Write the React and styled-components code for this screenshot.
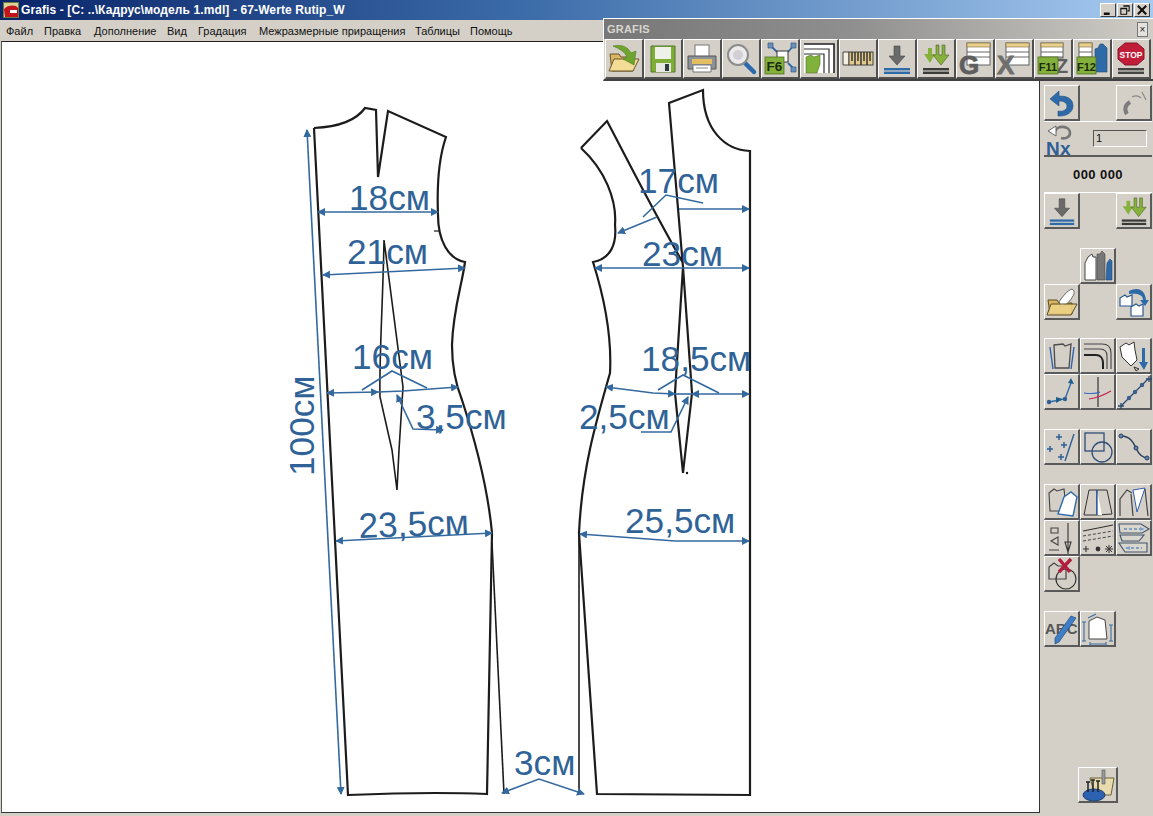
import React from "react";
import styled, { createGlobalStyle } from "styled-components";

const GlobalStyle = createGlobalStyle`
  html, body {
    margin: 0;
    padding: 0;
    background: #d4d0c8;
    overflow: hidden;
  }
`;

const Window = styled.div`
  position: relative;
  width: 1153px;
  height: 816px;
  display: flex;
  flex-direction: column;
  background: #d4d0c8;
  font-family: "Liberation Sans", Arial, sans-serif;
  overflow: hidden;
`;

const TitleBar = styled.div`
  height: 20px;
  display: flex;
  align-items: center;
  padding: 0 2px 0 3px;
  box-sizing: border-box;
  background: linear-gradient(90deg, #0a246a 0%, #3b6ba8 45%, #a6caf0 100%);
`;

const TitleText = styled.span`
  margin-left: 2px;
  color: #fff;
  font-size: 12px;
  font-weight: 700;
  letter-spacing: 0.11px;
  white-space: nowrap;
  flex: 1;
`;

const WindowControls = styled.div`
  display: flex;
  gap: 1px;
  margin-right: 1px;
`;

const ControlButton = styled.div`
  width: 14px;
  height: 12px;
  display: flex;
  align-items: center;
  justify-content: center;
  background: #d4d0c8;
  border-style: solid;
  border-width: 1px;
  border-color: #fff #404040 #404040 #fff;
`;

const MenuBar = styled.div`
  height: 21px;
  display: flex;
  align-items: center;
  padding-left: 6px;
  box-sizing: border-box;
  background: #d4d0c8;
`;

const MenuItem = styled.span`
  width: ${(p) => p.$w}px;
  font-size: 11px;
  color: #111;
  white-space: nowrap;
`;

const Workspace = styled.div`
  flex: 1;
  display: flex;
  min-height: 0;
  padding-bottom: 3px;
`;

const Canvas = styled.div`
  width: 1039px;
  margin-left: 1px;
  box-sizing: border-box;
  background: #fff;
  border-style: solid;
  border-width: 1px;
  border-color: #222 #333 #333 #555;
`;

const Drawing = styled.svg`
  display: block;
  width: 1037px;
  height: 770px;
  text {
    font-family: "Liberation Sans", Arial, sans-serif;
    font-size: 35.2px;
    fill: #2f6398;
  }
`;

const Outline = styled.path`
  fill: none;
  stroke: #1c1c1c;
  stroke-width: ${(p) => p.$w || 2.2};
  stroke-linejoin: miter;
`;

const Measure = styled.path`
  fill: none;
  stroke: #34699f;
  stroke-width: 1.6;
`;

const SidePanel = styled.div`
  flex: 1;
  display: flex;
  flex-direction: column;
  padding: 4px 1px 10px 4px;
  box-sizing: border-box;
`;

const ToolRow = styled.div`
  display: grid;
  grid-template-columns: repeat(3, 36px);
  margin-top: ${(p) => p.$gap || 0}px;
`;

const ToolButton = styled.div`
  width: 36px;
  height: 36px;
  grid-column: ${(p) => p.$col || "auto"};
  box-sizing: border-box;
  display: flex;
  align-items: center;
  justify-content: center;
  background: #d4d0c8;
  border-style: solid;
  border-width: 1px 2px 2px 1px;
  border-color: #fff #5a5a5a #5a5a5a #fff;
`;

const RepeatRow = styled.div`
  height: 36px;
  width: 108px;
  display: flex;
  align-items: center;
  padding-left: 3px;
  border-top: 1px solid #fff;
  border-bottom: 2px solid #5a5a5a;
  box-sizing: border-box;
`;

const RepeatInput = styled.div`
  width: 54px;
  height: 17px;
  margin-left: 14px;
  box-sizing: border-box;
  padding-left: 2px;
  font-size: 11px;
  line-height: 15px;
  color: #111;
  border-style: solid;
  border-width: 1px;
  border-color: #555 #fff #fff #555;
`;

const Counter = styled.div`
  width: 108px;
  height: 36px;
  display: flex;
  align-items: center;
  justify-content: center;
  box-sizing: border-box;
  font-size: 13px;
  font-weight: 700;
  color: #111;
  letter-spacing: 0.4px;
  border-bottom: 1px solid #fff;
`;

const PinButton = styled(ToolButton)`
  width: 40px;
  margin: auto 0 0 34px;
`;

const FloatingToolbar = styled.div`
  position: absolute;
  left: 603px;
  top: 18px;
  width: 550px;
  height: 63px;
  box-sizing: border-box;
  display: flex;
  flex-direction: column;
  background: #d4d0c8;
  border-style: solid;
  border-width: 1px 0 2px 1px;
  border-color: #fff #404040 #404040 #fff;
`;

const ToolbarTitle = styled.div`
  height: 20px;
  display: flex;
  align-items: center;
  justify-content: space-between;
  padding: 0 5px 0 3px;
  background: linear-gradient(90deg, #777 0%, #8f8f8f 45%, #d0cdc6 100%);
`;

const ToolbarName = styled.span`
  color: #d8d6d0;
  font-size: 11px;
  font-weight: 700;
  letter-spacing: 0.2px;
`;

const MiniClose = styled.div`
  width: 9px;
  height: 13px;
  display: flex;
  align-items: center;
  justify-content: center;
  font-size: 10px;
  color: #222;
  background: #e4e2dc;
  border: 1px solid #777;
`;

const ToolbarButtons = styled.div`
  display: flex;
  padding-left: 1px;
`;

const BarButton = styled.div`
  width: 39px;
  height: 40px;
  box-sizing: border-box;
  display: flex;
  align-items: center;
  justify-content: center;
  background: #d4d0c8;
  border-style: solid;
  border-width: 1px 2px 2px 1px;
  border-color: #fff #505050 #505050 #fff;
`;

const Glyph = styled.svg`
  display: block;
  flex: none;
  width: ${(p) => p.$size || 32}px;
  height: ${(p) => p.$size || 32}px;
  overflow: visible;
  text {
    font-family: "Liberation Sans", Arial, sans-serif;
    font-weight: 700;
  }
`;

const blue = "#2f6aa8";

const Ico = ({ children, size }) => (
  <Glyph viewBox="0 0 32 32" $size={size}>
    {children}
  </Glyph>
);

const Bars = ({ color, y = 25 }) => (
  <>
    <rect x="3" y={y} width="26" height="2.4" fill={color} />
    <rect x="3" y={y + 3.6} width="26" height="2.4" fill={color} />
  </>
);

const Table = ({ x = 10, y = 1, w = 20, h = 18, head = "#e8cf8a" }) => (
  <g>
    <rect x={x} y={y} width={w} height={h} fill="#fff" stroke="#555" strokeWidth="0.9" />
    <rect x={x} y={y} width={w} height={4} fill={head} stroke="#8a7a50" strokeWidth="0.7" />
    <path
      d={`M${x} ${y + 9}h${w}M${x} ${y + 14}h${w}M${x + w / 2} ${y}v${h}`}
      stroke="#555"
      strokeWidth="0.9"
    />
  </g>
);

const GreenTag = ({ label, w = 19, size = 11.5 }) => (
  <g>
    <rect x="1" y="14" width={w} height="17" fill="#83b13c" stroke="#4f6e22" strokeWidth="0.8" />
    <text x={1 + w / 2} y="27.5" fontSize={size} textAnchor="middle" fill="#1c2a10">
      {label}
    </text>
  </g>
);

const OpenIcon = () => (
  <Ico>
    <path d="M2 11h9l2 3h12v14H4z" fill="#d8b662" stroke="#6b5526" />
    <path d="M1 28l5-12h25l-6 12z" fill="#f2dc96" stroke="#6b5526" />
    <path d="M5 3c9-2 15 1 18 7l5-2-2 14-11-6 4-2c-2-5-7-8-14-11z" fill="#6fa52e" stroke="#4c7a1c" strokeWidth="0.6" />
  </Ico>
);
const SaveIcon = () => (
  <Ico>
    <path d="M4 3h24v26H4z" fill="#7fae37" stroke="#54752a" />
    <rect x="8" y="4" width="16" height="12" fill="#eef0ea" />
    <rect x="9" y="20" width="15" height="9" fill="#e8e8e2" />
    <rect x="18" y="21" width="4" height="7" fill="#2d3a44" />
  </Ico>
);
const PrintIcon = () => (
  <Ico>
    <rect x="9" y="2" width="14" height="12" fill="#fff" stroke="#777" />
    <path d="M2 13h28v13H2z" fill="#8d9298" stroke="#555" />
    <rect x="6" y="16" width="20" height="5" fill="#e3bf62" />
    <path d="M7 22h18v7H7z" fill="#fff" stroke="#777" />
    <path d="M10 25h12" stroke="#888" />
  </Ico>
);
const ZoomIcon = () => (
  <Ico>
    <path d="M19 19l10 10" stroke="#2b69ad" strokeWidth="4.5" strokeLinecap="round" />
    <circle cx="13" cy="12" r="10" fill="#eceaea" stroke="#8c8c8c" strokeWidth="2" />
    <circle cx="13" cy="12" r="5" fill="#d2d0d4" />
  </Ico>
);
const F6Icon = () => (
  <Ico>
    <path d="M13 9L6 2M24 9l6-7M24 20l6 6" stroke="#2f6aa8" strokeWidth="1.8" />
    <rect x="13" y="8" width="11" height="11" fill="#fff" stroke="#333" />
    <path d="M4 0h5v5H4zM27 0h5v5h-5zM27 24h5v5h-5z" fill="#6d8fb8" stroke="#2f5a8a" strokeWidth="0.7" />
    <GreenTag label="F6" size={13.5} />
  </Ico>
);
const FrameIcon = () => (
  <Ico>
    <path d="M1 1h30v29H1z" fill="#fff" stroke="none" />
    <path d="M1 1h30v29" fill="none" stroke="#222" strokeWidth="1.6" />
    <path d="M1 6h25v24M1 11h20v19" fill="none" stroke="#333" strokeWidth="1.2" />
    <path d="M3 14l5-2 3 2 6-2 0 9-3 9H3z" fill="#7fb23a" stroke="#4f6e22" strokeWidth="0.6" />
  </Ico>
);
const TapeIcon = () => (
  <Ico>
    <path d="M1 9h6v13H1z" fill="#f4f0e0" stroke="#444" />
    <rect x="7" y="9" width="24" height="13" fill="#e2c98c" stroke="#444" />
    <path d="M10 9v9M13 9v13M16 9v9M19 9v13M22 9v9M25 9v13M28 9v9" stroke="#2c2c2c" strokeWidth="1.4" />
  </Ico>
);
const DownIcon = ({ size }) => (
  <Ico size={size}>
    <path d="M13 3h6v10h5l-8 9-8-9h5z" fill="#6a6a6a" stroke="#444" strokeWidth="0.6" />
    <Bars color={blue} />
  </Ico>
);
const DownAllIcon = ({ size }) => (
  <Ico size={size}>
    <path d="M4 11h4V5h4v6h3l-5 9z" fill="#86b23c" />
    <path d="M13 12h3V2h3v10h3V2h3v10h4l-8 10z" fill="#86b23c" stroke="#3a4a1c" strokeWidth="0.5" />
    <Bars color="#3a3a3a" />
  </Ico>
);
const SheetGIcon = () => (
  <Ico>
    <Table x="8" y="0" w="23" h="22" />
    <text x="0" y="31" fontSize="26" fill="#5e5e5e" stroke="#5e5e5e" strokeWidth="0.8">G</text>
  </Ico>
);
const SheetXIcon = () => (
  <Ico>
    <Table x="8" y="0" w="23" h="22" />
    <text x="-1" y="31" fontSize="26" fill="#6e6e6e" stroke="#6e6e6e" strokeWidth="0.8">X</text>
  </Ico>
);
const F11Icon = () => (
  <Ico>
    <Table x="4" y="0" w="22" h="15" />
    <text x="19" y="30" fontSize="20" fill="#5e5e5e">Z</text>
    <GreenTag label="F11" w="20" size={11} />
  </Ico>
);
const F12Icon = () => (
  <Ico>
    <Table x="3" y="0" w="13" h="15" />
    <path d="M19 6l3-1 2-4 3 0 4 4v24H19z" fill="#2f6aa8" stroke="#1e4672" strokeWidth="0.6" />
    <GreenTag label="F12" w="19" size={11} />
  </Ico>
);
const StopIcon = () => (
  <Ico>
    <path d="M10 0h12l7 6v10l-7 6H10l-7-6V6z" fill="#c01e38" stroke="#8a1027" />
    <text x="16" y="15" fontSize="8.5" textAnchor="middle" fill="#fff">STOP</text>
    <Bars color="#444" />
  </Ico>
);

const UndoIcon = () => (
  <Ico>
    <path d="M4 12l9-8v5c9 0 14 3 14 10 0 6-6 10-13 10h-2v-5c5 1 9-1 9-5 0-3-3-5-8-5v5z" fill={blue} stroke="#1f4c7e" strokeWidth="0.6" />
  </Ico>
);
const RedoIcon = () => (
  <Ico>
    <path d="M9 27c-3-4-2-9 3-12" fill="none" stroke="#7c7c7c" strokeWidth="4" />
    <path d="M14 10c4-2 7-1 9 1M24 5l4 8" fill="none" stroke="#8a8a8a" strokeWidth="1.2" />
  </Ico>
);
const RepeatIcon = () => (
  <Ico>
    <path d="M8 9c1-7 15-7 15 1 0 5-6 6-9 5" fill="none" stroke="#777" strokeWidth="2.6" />
    <path d="M1 8l8-5v10z" fill="#fff" stroke="#666" />
    <text x="-1" y="32" fontSize="19" fill="#2f5f96">N</text>
    <text x="13" y="32" fontSize="19" fill="#2f5f96">x</text>
  </Ico>
);
const GarmentsIcon = () => (
  <Ico>
    <path d="M6 7l4-3 1 3h3v23H3V13z" fill="#fff" stroke="#444" />
    <path d="M15 4h3l2-3 3 3v26h-8z" fill="#777" stroke="#444" strokeWidth="0.6" />
    <path d="M25 13l3-4 2 2v19h-6z" fill="#2f6aa8" stroke="#1e4672" strokeWidth="0.6" />
  </Ico>
);
const FolderHandIcon = () => (
  <Ico>
    <path d="M2 14h9l2 3h13v11H4z" fill="#d8b662" stroke="#5e4a1e" />
    <path d="M13 16c3-5 9-12 13-13 2 1 3 4 1 7-3 5-6 9-12 11z" fill="#fff" stroke="#666" />
    <path d="M1 29l4-11 26 0-6 11z" fill="#eed48a" fillOpacity="0.85" stroke="#5e4a1e" />
  </Ico>
);
const SwapIcon = () => (
  <Ico>
    <path d="M2 12l5-3 2 2 5-2v11H2zM13 21l5-3 3 2 4-2v12H13z" fill="#fff" stroke="#2d5a92" strokeWidth="1.2" />
    <path d="M11 5c7-4 16-3 17 9h3l-4 6-5-6h3c0-6-7-7-14-6z" fill={blue} />
  </Ico>
);
const ResizeIcon = () => (
  <Ico>
    <path d="M8 5l9-1 2 2 6-2-2 24H9z" fill="none" stroke="#4b4b4b" strokeWidth="1.3" />
    <path d="M4 7l3 22M28 7l-3 22" stroke="#2f5fb0" strokeWidth="1.4" />
  </Ico>
);
const CornerIcon = () => (
  <Ico>
    <path d="M2 4h18c6 0 9 3 9 9v16M2 9h16c5 0 7 3 7 7v13" fill="none" stroke="#444" strokeWidth="1.1" />
    <path d="M2 15h12c5 0 7 4 7 8v6" fill="none" stroke="#222" strokeWidth="2" />
  </Ico>
);
const PieceDownIcon = () => (
  <Ico>
    <path d="M2 7l6-4 3 2 5-3 1 8 2 10-6 6-9-9z" fill="#fff" stroke="#333" />
    <path d="M24 8h3v14h3l-4 8-5-8h3z" fill={blue} />
    <path d="M16 27l5 2-3 2z" fill="none" stroke="#333" />
  </Ico>
);
const PolylineIcon = () => (
  <Ico>
    <path d="M3 26l16-3 6-16" fill="none" stroke={blue} strokeWidth="1.4" />
    <circle cx="3" cy="26" r="2.2" fill="#2f5f96" />
    <circle cx="19" cy="23" r="2.2" fill="#2f5f96" />
    <path d="M10 21l7 2-7 4zM22 7l3-5 3 6z" fill="#1f5f8c" />
  </Ico>
);
const CrossIcon = () => (
  <Ico>
    <path d="M16 1v30" stroke="#333" strokeWidth="1.2" />
    <path d="M2 17c8 1 12 1 16-1" fill="none" stroke="#3867c4" strokeWidth="1.2" />
    <path d="M7 23c8-1 15-4 22-8" fill="none" stroke="#c2254f" strokeWidth="1.2" />
  </Ico>
);
const DividedIcon = () => (
  <Ico>
    <path d="M3 30L30 3" stroke="#2a4a72" strokeWidth="1.3" />
    <path d="M3 27v6M0 30h6M28 3h6M31 0v6" stroke="#2a4a72" strokeWidth="1.3" />
    <circle cx="11" cy="22" r="2.2" fill="#3a5f8c" />
    <circle cx="17" cy="16" r="2.2" fill="#3a5f8c" />
    <circle cx="24" cy="9" r="2.2" fill="#3a5f8c" />
  </Ico>
);
const PointsIcon = () => (
  <Ico>
    <path d="M28 3L19 30" stroke="#2f5f96" strokeWidth="1.4" />
    <path d="M13 3v6M10 6h6M4 15v6M1 18h6M18 11v6M15 14h6M15 23v6M12 26h6" stroke="#2f5f96" strokeWidth="1.5" />
  </Ico>
);
const ShapesIcon = () => (
  <Ico>
    <rect x="3" y="2" width="19" height="18" fill="none" stroke="#2d4e78" strokeWidth="1.3" />
    <circle cx="20" cy="21" r="10" fill="none" stroke="#2d4e78" strokeWidth="1.3" />
  </Ico>
);
const CurveIcon = () => (
  <Ico>
    <path d="M3 5c9 0 12 6 15 12 3 7 7 10 12 10" fill="none" stroke="#2b3f5c" strokeWidth="1.5" />
    <circle cx="3" cy="5" r="2" fill="#5e86b8" stroke="#2b3f5c" />
    <circle cx="18" cy="17" r="2" fill="#5e86b8" stroke="#2b3f5c" />
    <circle cx="29" cy="27" r="2" fill="#5e86b8" stroke="#2b3f5c" />
  </Ico>
);
const CopyPieceIcon = () => (
  <Ico>
    <path d="M3 7l5-4 3 2 7-2 1 9-4 13H4z" fill="none" stroke="#444" strokeWidth="1.1" />
    <path d="M18 11l7-5 6 5-4 19-15-2z" fill="#fff" stroke={blue} strokeWidth="1.4" />
  </Ico>
);
const PanelsIcon = () => (
  <Ico>
    <path d="M7 4h8v25H2zM15 4h10l5 24-15 1z" fill="#d4d0c8" stroke="#333" />
    <path d="M15 4l5 25h-5z" fill="#fff" />
    <path d="M15 4v25" stroke="#2f5fb0" strokeWidth="1.4" />
  </Ico>
);
const CollarIcon = () => (
  <Ico>
    <path d="M2 30V13l7-9 5 3" fill="none" stroke="#444" strokeWidth="1.2" />
    <path d="M15 4l12-2-8 24z" fill="#fff" stroke="#2f5fb0" strokeWidth="1" />
    <path d="M27 3l3 27M13 8l2 22" fill="none" stroke="#444" strokeWidth="1.2" />
  </Ico>
);
const SymbolsIcon = () => (
  <Ico>
    <path d="M22 1v31M19 20h6l-3 10z" fill="none" stroke="#333" strokeWidth="1.1" />
    <path d="M5 6h7v5H5zM12 15l-7 4 7 4zM3 28h10" fill="none" stroke="#444" strokeWidth="1.1" />
  </Ico>
);
const StitchIcon = () => (
  <Ico>
    <path d="M1 9l30-6" stroke="#333" strokeWidth="1.1" />
    <path d="M1 14l30-5M1 19l30-5" stroke="#444" strokeWidth="1" strokeDasharray="3 2" />
    <path d="M4 24v6M1 27h6" stroke="#333" strokeWidth="1.1" />
    <circle cx="16" cy="27" r="2.4" fill="#333" />
    <path d="M27 23v8M23 27h8M24 24l6 6M30 24l-6 6" stroke="#333" strokeWidth="1" />
  </Ico>
);
const LayoutIcon = () => (
  <Ico>
    <path d="M1 2h22l8 5-7 4H2zM2 13h24l-5 6H4zM1 21h28v9H7z" fill="#d9d6ce" stroke="#41536a" strokeWidth="1.1" />
    <path d="M6 7h16M8 26h16" stroke="#2f6aa8" strokeDasharray="3 2" />
    <path d="M22 5l5 2-5 2zM12 24l-5 2 5 2z" fill="#7da2cf" />
  </Ico>
);
const DeleteIcon = () => (
  <Ico>
    <path d="M3 9l5-4 4 3h8v13H3z" fill="none" stroke="#444" strokeWidth="1.2" />
    <circle cx="20" cy="21" r="10" fill="none" stroke="#333" strokeWidth="1.2" />
    <path d="M13 1l11 13M25 1L13 14" stroke="#b31d3c" strokeWidth="3.4" />
  </Ico>
);
const TextIcon = () => (
  <Ico>
    <text x="-1" y="21" fontSize="15" fill="#555">ABC</text>
    <path d="M25 3l5 2-17 24-4 2 0-6z" fill="#3f7ec6" stroke="#1f4c7e" strokeWidth="0.7" />
  </Ico>
);
const DimensionIcon = () => (
  <Ico>
    <path d="M7 8l8-4 8 3 2 19H7z" fill="#fff" stroke="#444" />
    <path d="M2 9v19M0 9h4M0 28h4M29 12v16M27 12h4M27 28h4M8 31h16M8 29v4M24 29v4M6 5l8-4" stroke="#3b6aa0" strokeWidth="1.1" fill="none" />
  </Ico>
);
const PinsIcon = () => (
  <Ico>
    <path d="M8 9h24l-3 17H13z" fill="#e8dcae" stroke="#6b5f36" />
    <path d="M20 1h3v14h-3z" fill="#9a9a9a" stroke="#555" strokeWidth="0.6" />
    <ellipse cx="12" cy="26" rx="11" ry="6" fill="#2c62b0" stroke="#1c3f74" />
    <path d="M6 23V13M11 23V11M16 23V12" stroke="#222" strokeWidth="1.5" />
    <path d="M4 13h4M9 11h4M14 12h4" stroke="#222" strokeWidth="1.5" />
  </Ico>
);

const toolbarIcons = [
  OpenIcon, SaveIcon, PrintIcon, ZoomIcon, F6Icon, FrameIcon, TapeIcon,
  DownIcon, DownAllIcon, SheetGIcon, SheetXIcon, F11Icon, F12Icon, StopIcon,
];

const menuItems = [
  { label: "Файл", w: 38 },
  { label: "Правка", w: 50 },
  { label: "Дополнение", w: 73 },
  { label: "Вид", w: 31 },
  { label: "Градация", w: 61 },
  { label: "Межразмерные приращения", w: 156 },
  { label: "Таблицы", w: 55 },
  { label: "Помощь", w: 50 },
];

const toolGroups = [
  { gap: 18, icons: [ResizeIcon, CornerIcon, PieceDownIcon] },
  { gap: 0, icons: [PolylineIcon, CrossIcon, DividedIcon] },
  { gap: 19, icons: [PointsIcon, ShapesIcon, CurveIcon] },
  { gap: 19, icons: [CopyPieceIcon, PanelsIcon, CollarIcon] },
  { gap: 0, icons: [SymbolsIcon, StitchIcon, LayoutIcon] },
  { gap: 0, icons: [DeleteIcon] },
  { gap: 19, icons: [TextIcon, DimensionIcon] },
];

const labels = [
  { x: 349, y: 210, t: "18см" },
  { x: 347, y: 264, t: "21см" },
  { x: 352, y: 369, t: "16см" },
  { x: 416, y: 429, t: "3,5см" },
  { x: 638, y: 193, t: "17см" },
  { x: 642, y: 266, t: "23см" },
  { x: 641, y: 371, t: "18,5см" },
  { x: 579, y: 429, t: "2,5см" },
  { x: 625, y: 533, t: "25,5см" },
  { x: 514, y: 775, t: "3см" },
];

function PatternDrawing() {
  return (
    <Drawing viewBox="2 42 1037 770">
      <defs>
        <marker id="tip" viewBox="0 0 8 8" refX="7" refY="4" markerWidth="8" markerHeight="8" markerUnits="userSpaceOnUse" orient="auto-start-reverse">
          <path d="M0 0L8 4L0 8z" fill="#34699f" />
        </marker>
      </defs>

      {/* back panel */}
      <Outline d="M314 128C336 127 355 122 365 108L376 110L378 177L388 111L446 137C438 160 437 190 438 215C438 240 448 259 465 262C462 285 453 310 452 345C452 370 456 385 462 400C475 440 488 490 492 533L487 794C440 792 395 793 348 795L314 128" />
      <Outline $w={1.2} d="M434 231L439 231" />
      <Outline $w={1.6} d="M492 543L504 794" />
      <Outline $w={1.6} d="M384 240C383 300 379 360 380 397L392 450L397 490L399 450L403 387L384 240" />

      {/* front panel */}
      <Outline d="M581 148L607 121C625 155 650 205 683 263M581 148C605 170 617 200 615 225C617 245 610 259 593 262C605 300 612 335 610 373C595 425 582 470 579 533L597 794L750 795L750 151C725 150 703 130 703 90L669 103L683 267L692 393L683 473L675 393L683 267" />
      <Outline $w={1.6} d="M579 533L579 794" />
      <circle cx="687" cy="473" r="1.2" fill="#111" />

      {/* measures */}
      <Measure d="M307 130L341 794" markerStart="url(#tip)" markerEnd="url(#tip)" />
      <Measure d="M318 212L438 212" markerStart="url(#tip)" markerEnd="url(#tip)" />
      <Measure d="M323 275L465 268" markerStart="url(#tip)" markerEnd="url(#tip)" />
      <Measure d="M327 393L378 392" markerStart="url(#tip)" markerEnd="url(#tip)" />
      <Measure d="M378 392L403 391L458 387" markerEnd="url(#tip)" />
      <Measure d="M362 390L392 371L427 388" />
      <Measure d="M397 395L413 429L443 430" markerStart="url(#tip)" markerEnd="url(#tip)" />
      <Measure d="M336 541L492 533" markerStart="url(#tip)" markerEnd="url(#tip)" />
      <Measure d="M618 233L657 217" markerStart="url(#tip)" />
      <Measure d="M643 217L666 195L703 203" />
      <Measure d="M679 209L749 209" markerEnd="url(#tip)" />
      <Measure d="M595 268L749 268" markerStart="url(#tip)" markerEnd="url(#tip)" />
      <Measure d="M606 387L653 393L675 394" markerStart="url(#tip)" markerEnd="url(#tip)" />
      <Measure d="M692 394L749 394" markerStart="url(#tip)" markerEnd="url(#tip)" />
      <Measure d="M675 394L692 394" />
      <Measure d="M658 390L683 375L719 393" />
      <Measure d="M641 432L671 432L688 397" markerEnd="url(#tip)" />
      <Measure d="M580 534L675 541L749 541" markerStart="url(#tip)" markerEnd="url(#tip)" />
      <Measure d="M502 793L539 779L584 794" markerStart="url(#tip)" markerEnd="url(#tip)" />

      {labels.map((l) => (
        <text key={l.t} x={l.x} y={l.y}>
          {l.t}
        </text>
      ))}
      <text x="359" y="538" transform="rotate(-2 359 538)">23,5см</text>
      <text x="314" y="476" transform="rotate(-90 314 476)">100см</text>
    </Drawing>
  );
}

export default function App() {
  return (
    <Window>
      <GlobalStyle />
      <TitleBar>
        <Glyph viewBox="0 0 16 16" $size={16}>
          <rect x="0.5" y="0.5" width="15" height="15" fill="#d9d49a" stroke="#6b7a3a" />
          <path d="M1 7c3-4 9-4 12-3l2 2v9H2z" fill="#c2141c" />
          <path d="M7 8h7v3H7z" fill="#fff" />
        </Glyph>
        <TitleText>Grafis - [C: ..\Кадрус\модель 1.mdl] - 67-Werte Rutip_W</TitleText>
        <WindowControls>
          <ControlButton>
            <Glyph viewBox="0 0 12 12" $size={10}>
              <path d="M1 9h7v3H1z" fill="#111" />
            </Glyph>
          </ControlButton>
          <ControlButton>
            <Glyph viewBox="0 0 12 12" $size={10}>
              <path d="M4 1h7v6H9M1 4h7v7H1zM1 4.5h7M4 1.5h7" fill="none" stroke="#111" strokeWidth="1.3" />
            </Glyph>
          </ControlButton>
          <ControlButton>
            <Glyph viewBox="0 0 12 12" $size={10}>
              <path d="M1 1l10 10M11 1L1 11" stroke="#111" strokeWidth="2.6" />
            </Glyph>
          </ControlButton>
        </WindowControls>
      </TitleBar>

      <MenuBar>
        {menuItems.map((item) => (
          <MenuItem key={item.label} $w={item.w}>{item.label}</MenuItem>
        ))}
      </MenuBar>

      <Workspace>
        <Canvas>
          <PatternDrawing />
        </Canvas>
        <SidePanel>
          <ToolRow $gap={40}>
            <ToolButton><UndoIcon /></ToolButton>
            <ToolButton $col={3}><RedoIcon /></ToolButton>
          </ToolRow>
          <RepeatRow>
            <RepeatIcon />
            <RepeatInput>1</RepeatInput>
          </RepeatRow>
          <Counter>000 000</Counter>
          <ToolRow>
            <ToolButton><DownIcon size={30} /></ToolButton>
            <ToolButton $col={3}><DownAllIcon size={30} /></ToolButton>
          </ToolRow>
          <ToolRow $gap={19}>
            <ToolButton $col={2}><GarmentsIcon /></ToolButton>
          </ToolRow>
          <ToolRow>
            <ToolButton><FolderHandIcon /></ToolButton>
            <ToolButton $col={3}><SwapIcon /></ToolButton>
          </ToolRow>
          {toolGroups.map((group, i) => (
            <ToolRow key={i} $gap={group.gap}>
              {group.icons.map((Icon, j) => (
                <ToolButton key={j}><Icon /></ToolButton>
              ))}
            </ToolRow>
          ))}
          <PinButton><PinsIcon /></PinButton>
        </SidePanel>
      </Workspace>

      <FloatingToolbar>
        <ToolbarTitle>
          <ToolbarName>GRAFIS</ToolbarName>
          <MiniClose>×</MiniClose>
        </ToolbarTitle>
        <ToolbarButtons>
          {toolbarIcons.map((Icon, i) => (
            <BarButton key={i}><Icon /></BarButton>
          ))}
        </ToolbarButtons>
      </FloatingToolbar>
    </Window>
  );
}
